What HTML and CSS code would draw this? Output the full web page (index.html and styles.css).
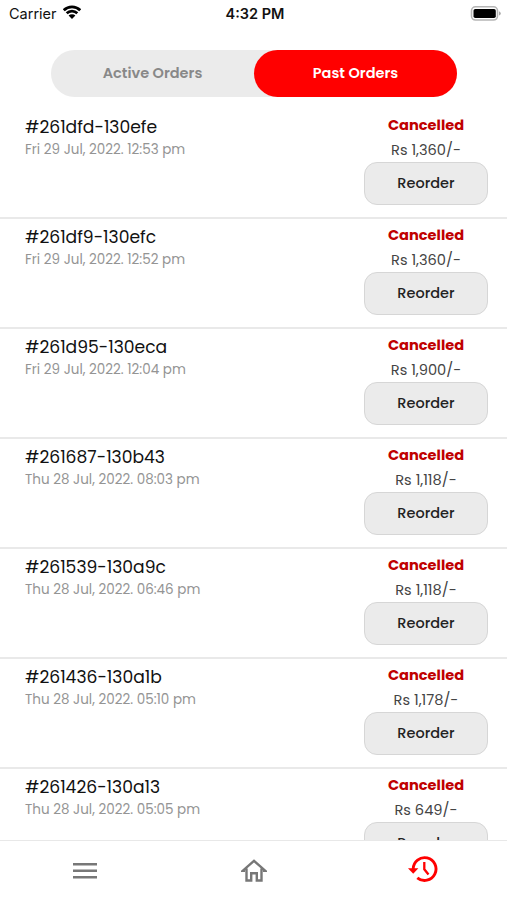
FILE: index.html
```
<!DOCTYPE html>
<html lang="en">

<head>
	<meta charset="utf-8">
	<title>Past Orders</title>
	<link rel="stylesheet" href="styles.css">
</head>

<body>
	<header class="status">
		<div class="carrier">
			<span>Carrier</span>
			<svg class="wifi" width="18" height="14" viewBox="0 0 18 14">
				<path d="M.8 5.200a11.600 11.600 0 0 1 16.400 0M3.700 8.300a7.500 7.500 0 0 1 10.600 0" fill="none" stroke="#000" stroke-width="2.700"/>
				<path d="M5.600 10.600a4.800 4.800 0 0 1 6.800 0L9 14z"/>
			</svg>
		</div>
		<div class="time">4:32 PM</div>
		<svg class="battery" width="31" height="15" viewBox="0 0 31 15">
			<rect x="1.500" y=".8" width="26" height="13.200" rx="4" fill="#fff" stroke="#b5b5b5" stroke-width="1.600"/>
			<rect x="3.500" y="3" width="22.300" height="9" rx="1.800"/>
			<path d="M29 5.200q1.800.7 1.800 2.200T29 9.600z" fill="#aaa"/>
		</svg>
	</header>

	<div class="tabs">
		<div class="tab">Active Orders</div>
		<div class="tab active">Past Orders</div>
	</div>

	<main class="orders">
		<section class="order">
			<div class="info">
				<div class="number">#261dfd-130efe</div>
				<div class="date">Fri 29 Jul, 2022. 12:53 pm</div>
			</div>
			<div class="side">
				<div class="state">Cancelled</div>
				<div class="price">Rs 1,360/-</div>
				<button class="reorder">Reorder</button>
			</div>
		</section>
		<section class="order">
			<div class="info">
				<div class="number">#261df9-130efc</div>
				<div class="date">Fri 29 Jul, 2022. 12:52 pm</div>
			</div>
			<div class="side">
				<div class="state">Cancelled</div>
				<div class="price">Rs 1,360/-</div>
				<button class="reorder">Reorder</button>
			</div>
		</section>
		<section class="order">
			<div class="info">
				<div class="number">#261d95-130eca</div>
				<div class="date">Fri 29 Jul, 2022. 12:04 pm</div>
			</div>
			<div class="side">
				<div class="state">Cancelled</div>
				<div class="price">Rs 1,900/-</div>
				<button class="reorder">Reorder</button>
			</div>
		</section>
		<section class="order">
			<div class="info">
				<div class="number">#261687-130b43</div>
				<div class="date">Thu 28 Jul, 2022. 08:03 pm</div>
			</div>
			<div class="side">
				<div class="state">Cancelled</div>
				<div class="price">Rs 1,118/-</div>
				<button class="reorder">Reorder</button>
			</div>
		</section>
		<section class="order">
			<div class="info">
				<div class="number">#261539-130a9c</div>
				<div class="date">Thu 28 Jul, 2022. 06:46 pm</div>
			</div>
			<div class="side">
				<div class="state">Cancelled</div>
				<div class="price">Rs 1,118/-</div>
				<button class="reorder">Reorder</button>
			</div>
		</section>
		<section class="order">
			<div class="info">
				<div class="number">#261436-130a1b</div>
				<div class="date">Thu 28 Jul, 2022. 05:10 pm</div>
			</div>
			<div class="side">
				<div class="state">Cancelled</div>
				<div class="price">Rs 1,178/-</div>
				<button class="reorder">Reorder</button>
			</div>
		</section>
		<section class="order">
			<div class="info">
				<div class="number">#261426-130a13</div>
				<div class="date">Thu 28 Jul, 2022. 05:05 pm</div>
			</div>
			<div class="side">
				<div class="state">Cancelled</div>
				<div class="price">Rs 649/-</div>
				<button class="reorder">Reorder</button>
			</div>
		</section>
	</main>

	<nav class="bottom">
		<a class="item">
			<svg width="24" height="18" viewBox="0 0 24 18">
				<path d="M0 2.200h24M0 8.700h24M0 15.200h24" stroke="#777" stroke-width="2.500"/>
			</svg>
		</a>
		<a class="item">
			<svg width="26" height="24" viewBox="0 0 26 24" fill="none" stroke="#777" stroke-width="2.400">
				<path d="M4 11.700H1.800L13 1.900l11.200 9.800H22M5.500 9.500v12h4.700v-7.200h5.600v7.200h4.700v-12"/>
			</svg>
		</a>
		<a class="item">
			<svg class="history" width="30" height="28" viewBox="0 0 30 28">
				<path d="M5.200 14A11.400 11.400 0 1 1 9.300 22.800" fill="none" stroke="#f00" stroke-width="2.900"/>
				<path d="M0 13.300h10.400L5.200 18.800z" fill="#f00"/>
				<path d="M16.300 7v7.300l4.200 5.200" fill="none" stroke="#f00" stroke-width="2.300"/>
			</svg>
		</a>
	</nav>
</body>

</html>
```
FILE: styles.css
```
body {
	margin: 0;
	height: 900px;
	display: flex;
	flex-direction: column;
	overflow: hidden;
	background: #fff;
	color: #111;
	font-family: Poppins, Inter, sans-serif;
}

.status {
	height: 28px;
	padding: 0 6px 0 9px;
	display: grid;
	grid-template-columns: 1fr auto 1fr;
	align-items: center;
	font-family: Inter, sans-serif;
	font-size: 14.5px;
}

.carrier {
	display: flex;
	align-items: center;
	gap: 6px;
	margin-top: -2px;
}

.wifi {
	margin-top: -2px;
}

.time {
	margin-top: -2px;
	font-weight: 600;
}

.battery {
	justify-self: end;
	margin-top: -2px;
}

.tabs {
	flex: none;
	display: flex;
	width: 406px;
	height: 47px;
	margin: 22px 0 0 51px;
	border-radius: 24px;
	background: #ebebeb;
}

.tab {
	flex: 1;
	border-radius: 24px;
	line-height: 46px;
	text-align: center;
	font-size: 14.5px;
	font-weight: 600;
	color: #888;
}

.active {
	background: #f00;
	color: #fff;
}

.orders {
	flex: 1;
	min-height: 0;
	margin-top: 12px;
	overflow: hidden;
}

.order {
	box-sizing: border-box;
	height: 110px;
	padding: 4px 19px 0 25px;
	display: flex;
	justify-content: space-between;
	border-bottom: 2px solid #e9e9e9;
}

.info {
	padding-top: 2px;
}

.number {
	font-size: 17.15px;
	line-height: 24px;
}

.date {
	font-size: 13.5px;
	line-height: 22px;
	color: #949494;
}

.side {
	width: 124px;
	text-align: center;
}

.state {
	font-size: 14.6px;
	font-weight: 700;
	line-height: 25px;
	color: #c00000;
}

.price {
	font-size: 14.6px;
	line-height: 25px;
	color: #444;
}

.reorder {
	display: block;
	width: 124px;
	height: 43px;
	margin: -1px 0 0;
	padding: 0;
	border: 1px solid #d6d6d6;
	border-radius: 13px;
	background: #ebebeb;
	color: #222;
	font-family: inherit;
	font-size: 14.5px;
	font-weight: 500;
}

.bottom {
	flex: none;
	box-sizing: border-box;
	height: 60px;
	display: flex;
	border-top: 1px solid #e8e8e8;
}

.item {
	flex: 1;
	display: flex;
	align-items: center;
	justify-content: center;
}

.history {
	margin-top: -4px;
}
```
